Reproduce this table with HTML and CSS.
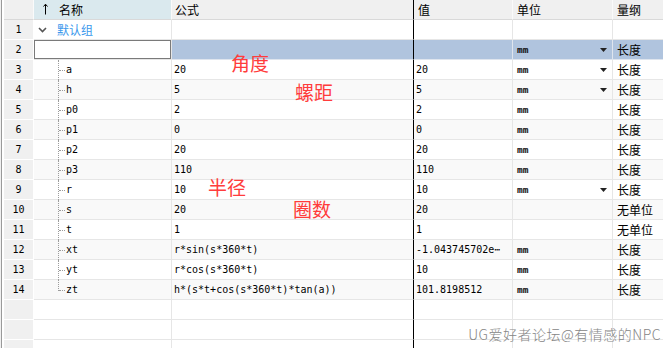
FILE: index.html
```html
<!DOCTYPE html>
<html lang="zh">
<head>
<meta charset="utf-8">
<title>表达式</title>
<link rel="stylesheet" href="styles.css">
</head>
<body>
<div class="sheet">
  <div class="row head">
    <div class="c num"></div>
    <div class="c name sorted"><svg class="sort" width="5" height="12" viewBox="0 0 5 12"><path d="M2.5 1.5V11.5M0.5 3.5L2.5 1.2L4.5 3.5" fill="none" stroke="#000" stroke-width="1"/></svg><span class="zh">名称</span></div>
    <div class="c formula"><span class="zh">公式</span></div>
    <div class="c value"><span class="zh">值</span></div>
    <div class="c unit"><span class="zh">单位</span></div>
    <div class="c dim"><span class="zh">量纲</span></div>
  </div>
  <div class="row">
    <div class="c num">1</div>
    <div class="c name group"><svg class="chev" width="9" height="6" viewBox="0 0 9 6"><path d="M1 1L4.5 4.5L8 1" fill="none" stroke="#555" stroke-width="1.6"/></svg><span class="zh grp">默认组</span></div>
    <div class="c formula"></div>
    <div class="c value"></div>
    <div class="c unit"></div>
    <div class="c dim"></div>
  </div>
  <div class="row sel">
    <div class="c num">2</div>
    <div class="c name edit"><div class="box"></div></div>
    <div class="c formula"></div>
    <div class="c value"></div>
    <div class="c unit"><span class="mm">mm</span><svg class="dd" width="7" height="4" viewBox="0 0 7 4"><path d="M0 0H7L3.5 4Z" fill="#222"/></svg></div>
    <div class="c dim"><span class="zh">长度</span></div>
  </div>
  <div class="row">
    <div class="c num">3</div>
    <div class="c name child">a</div>
    <div class="c formula">20</div>
    <div class="c value">20</div>
    <div class="c unit"><span class="mm">mm</span><svg class="dd" width="7" height="4" viewBox="0 0 7 4"><path d="M0 0H7L3.5 4Z" fill="#222"/></svg></div>
    <div class="c dim"><span class="zh">长度</span></div>
  </div>
  <div class="row alt">
    <div class="c num">4</div>
    <div class="c name child">h</div>
    <div class="c formula">5</div>
    <div class="c value">5</div>
    <div class="c unit"><span class="mm">mm</span><svg class="dd" width="7" height="4" viewBox="0 0 7 4"><path d="M0 0H7L3.5 4Z" fill="#222"/></svg></div>
    <div class="c dim"><span class="zh">长度</span></div>
  </div>
  <div class="row">
    <div class="c num">5</div>
    <div class="c name child">p0</div>
    <div class="c formula">2</div>
    <div class="c value">2</div>
    <div class="c unit"><span class="mm">mm</span></div>
    <div class="c dim"><span class="zh">长度</span></div>
  </div>
  <div class="row alt">
    <div class="c num">6</div>
    <div class="c name child">p1</div>
    <div class="c formula">0</div>
    <div class="c value">0</div>
    <div class="c unit"><span class="mm">mm</span></div>
    <div class="c dim"><span class="zh">长度</span></div>
  </div>
  <div class="row">
    <div class="c num">7</div>
    <div class="c name child">p2</div>
    <div class="c formula">20</div>
    <div class="c value">20</div>
    <div class="c unit"><span class="mm">mm</span></div>
    <div class="c dim"><span class="zh">长度</span></div>
  </div>
  <div class="row alt">
    <div class="c num">8</div>
    <div class="c name child">p3</div>
    <div class="c formula">110</div>
    <div class="c value">110</div>
    <div class="c unit"><span class="mm">mm</span></div>
    <div class="c dim"><span class="zh">长度</span></div>
  </div>
  <div class="row">
    <div class="c num">9</div>
    <div class="c name child">r</div>
    <div class="c formula">10</div>
    <div class="c value">10</div>
    <div class="c unit"><span class="mm">mm</span><svg class="dd" width="7" height="4" viewBox="0 0 7 4"><path d="M0 0H7L3.5 4Z" fill="#222"/></svg></div>
    <div class="c dim"><span class="zh">长度</span></div>
  </div>
  <div class="row alt">
    <div class="c num">10</div>
    <div class="c name child">s</div>
    <div class="c formula">20</div>
    <div class="c value">20</div>
    <div class="c unit"></div>
    <div class="c dim"><span class="zh">无单位</span></div>
  </div>
  <div class="row">
    <div class="c num">11</div>
    <div class="c name child">t</div>
    <div class="c formula">1</div>
    <div class="c value">1</div>
    <div class="c unit"></div>
    <div class="c dim"><span class="zh">无单位</span></div>
  </div>
  <div class="row alt">
    <div class="c num">12</div>
    <div class="c name child">xt</div>
    <div class="c formula">r*sin(s*360*t)</div>
    <div class="c value">-1.043745702e⋯</div>
    <div class="c unit"><span class="mm">mm</span></div>
    <div class="c dim"><span class="zh">长度</span></div>
  </div>
  <div class="row">
    <div class="c num">13</div>
    <div class="c name child">yt</div>
    <div class="c formula">r*cos(s*360*t)</div>
    <div class="c value">10</div>
    <div class="c unit"><span class="mm">mm</span></div>
    <div class="c dim"><span class="zh">长度</span></div>
  </div>
  <div class="row alt">
    <div class="c num">14</div>
    <div class="c name child last">zt</div>
    <div class="c formula">h*(s*t+cos(s*360*t)*tan(a))</div>
    <div class="c value">101.8198512</div>
    <div class="c unit"><span class="mm">mm</span></div>
    <div class="c dim"><span class="zh">长度</span></div>
  </div>
  <div class="row">
    <div class="c num"></div>
    <div class="c name"></div>
    <div class="c formula"></div>
    <div class="c value"></div>
    <div class="c unit"></div>
    <div class="c dim"></div>
  </div>
  <div class="row">
    <div class="c num"></div>
    <div class="c name"></div>
    <div class="c formula"></div>
    <div class="c value"></div>
    <div class="c unit"></div>
    <div class="c dim"></div>
  </div>
  <div class="row">
    <div class="c num"></div>
    <div class="c name"></div>
    <div class="c formula"></div>
    <div class="c value"></div>
    <div class="c unit"></div>
    <div class="c dim"></div>
  </div>
</div>
<div class="note n-angle">角度</div>
<div class="note n-pitch">螺距</div>
<div class="note n-radius">半径</div>
<div class="note n-turns">圈数</div>
<div class="watermark">UG爱好者论坛@有情感的NPC</div>
</body>
</html>
```

FILE: styles.css
```css
* { box-sizing: border-box; margin: 0; padding: 0; }
html, body { width: 663px; height: 348px; overflow: hidden; }
body {
  position: relative;
  background: #f0f0f0;
  font-family: "DejaVu Sans Mono", "Noto Sans CJK SC", monospace;
  font-size: 10px;
  color: #000;
}
.sheet {
  height: 348px;
  margin-left: 1px;
  border-left: 1px solid #9a9a9a;
  padding-left: 2px;
  background: #fff;
  overflow: hidden;
}
.row {
  display: grid;
  grid-template-columns: 30px 138px 241px 100px 100px 1fr;
  height: 20px;
}
.c {
  height: 20px;
  line-height: 19px;
  border-right: 1px solid #e6e6e6;
  border-bottom: 1px solid #e6e6e6;
  padding-left: 2px;
  white-space: nowrap;
  overflow: hidden;
}
.zh {
  font-family: "Noto Sans CJK SC", sans-serif;
  font-size: 12px;
}
.formula { border-right: none; }
.value { border-left: 1px solid #000; padding-left: 2px; }
.unit {
  display: flex;
  align-items: center;
  justify-content: space-between;
  padding-left: 4px;
  padding-right: 5px;
}
.mm { color: #111; font-size: 9.5px; font-weight: bold; }
.dim { padding-left: 4px; border-right: none; }
.num {
  background: #f0f0f0;
  text-align: center;
  padding-left: 0;
  border-right-color: #fff;
  border-bottom-color: #fff;
}

/* header */
.head .c {
  background: #f0f0f0;
  border-bottom-color: #d9d9d9;
  border-right-color: #fafafa;
}
.head .sorted { background: #dae9ee; display: flex; align-items: center; padding-left: 9px; }
.head .sort { margin-right: 11px; margin-top: -2px; }
.head .formula { padding-left: 3px; }
.head .value { padding-left: 4px; }

/* alternating rows */
.alt .c:not(.num) { background: #f9f9f9; }

/* selected row */
.sel .formula, .sel .value, .sel .unit, .sel .dim {
  background: #b0c4de;
  border-bottom-color: #dfe5ee;
  border-right-color: #dfe5ee;
}
.sel .value { border-left-color: #000; }
.sel .edit { padding: 0; }
.sel .edit .box {
  width: 137px;
  height: 19px;
  border: 1px solid #7a7a7a;
  background: #fff;
}

/* tree */
.group { display: flex; align-items: center; padding-left: 4px; }
.chev { margin-right: 10px; }
.grp { color: #3a98ec; }
.child { position: relative; padding-left: 32px; overflow: visible; }
.child::before {
  content: "";
  position: absolute;
  left: 24px;
  top: 0;
  bottom: -1px;
  border-left: 1px dotted #9c9c9c;
}
.child::after {
  content: "";
  position: absolute;
  left: 25px;
  top: 10px;
  width: 6px;
  border-top: 1px dotted #9c9c9c;
}
.child.last::before { bottom: auto; height: 11px; }

/* annotations */
.note {
  position: absolute;
  font-family: "Noto Sans CJK SC", sans-serif;
  font-size: 19px;
  line-height: 19px;
  color: #ff3c3c;
}
.n-angle { left: 231px; top: 53px; }
.n-pitch { left: 295px; top: 82px; }
.n-radius { left: 208px; top: 177px; }
.n-turns { left: 293px; top: 199px; }

.watermark {
  position: absolute;
  right: 2px;
  top: 326px;
  font-family: "Noto Sans CJK SC", sans-serif;
  font-size: 14px;
  font-weight: 300;
  line-height: 16px;
  letter-spacing: 0.5px;
  color: #858585;
}
```
